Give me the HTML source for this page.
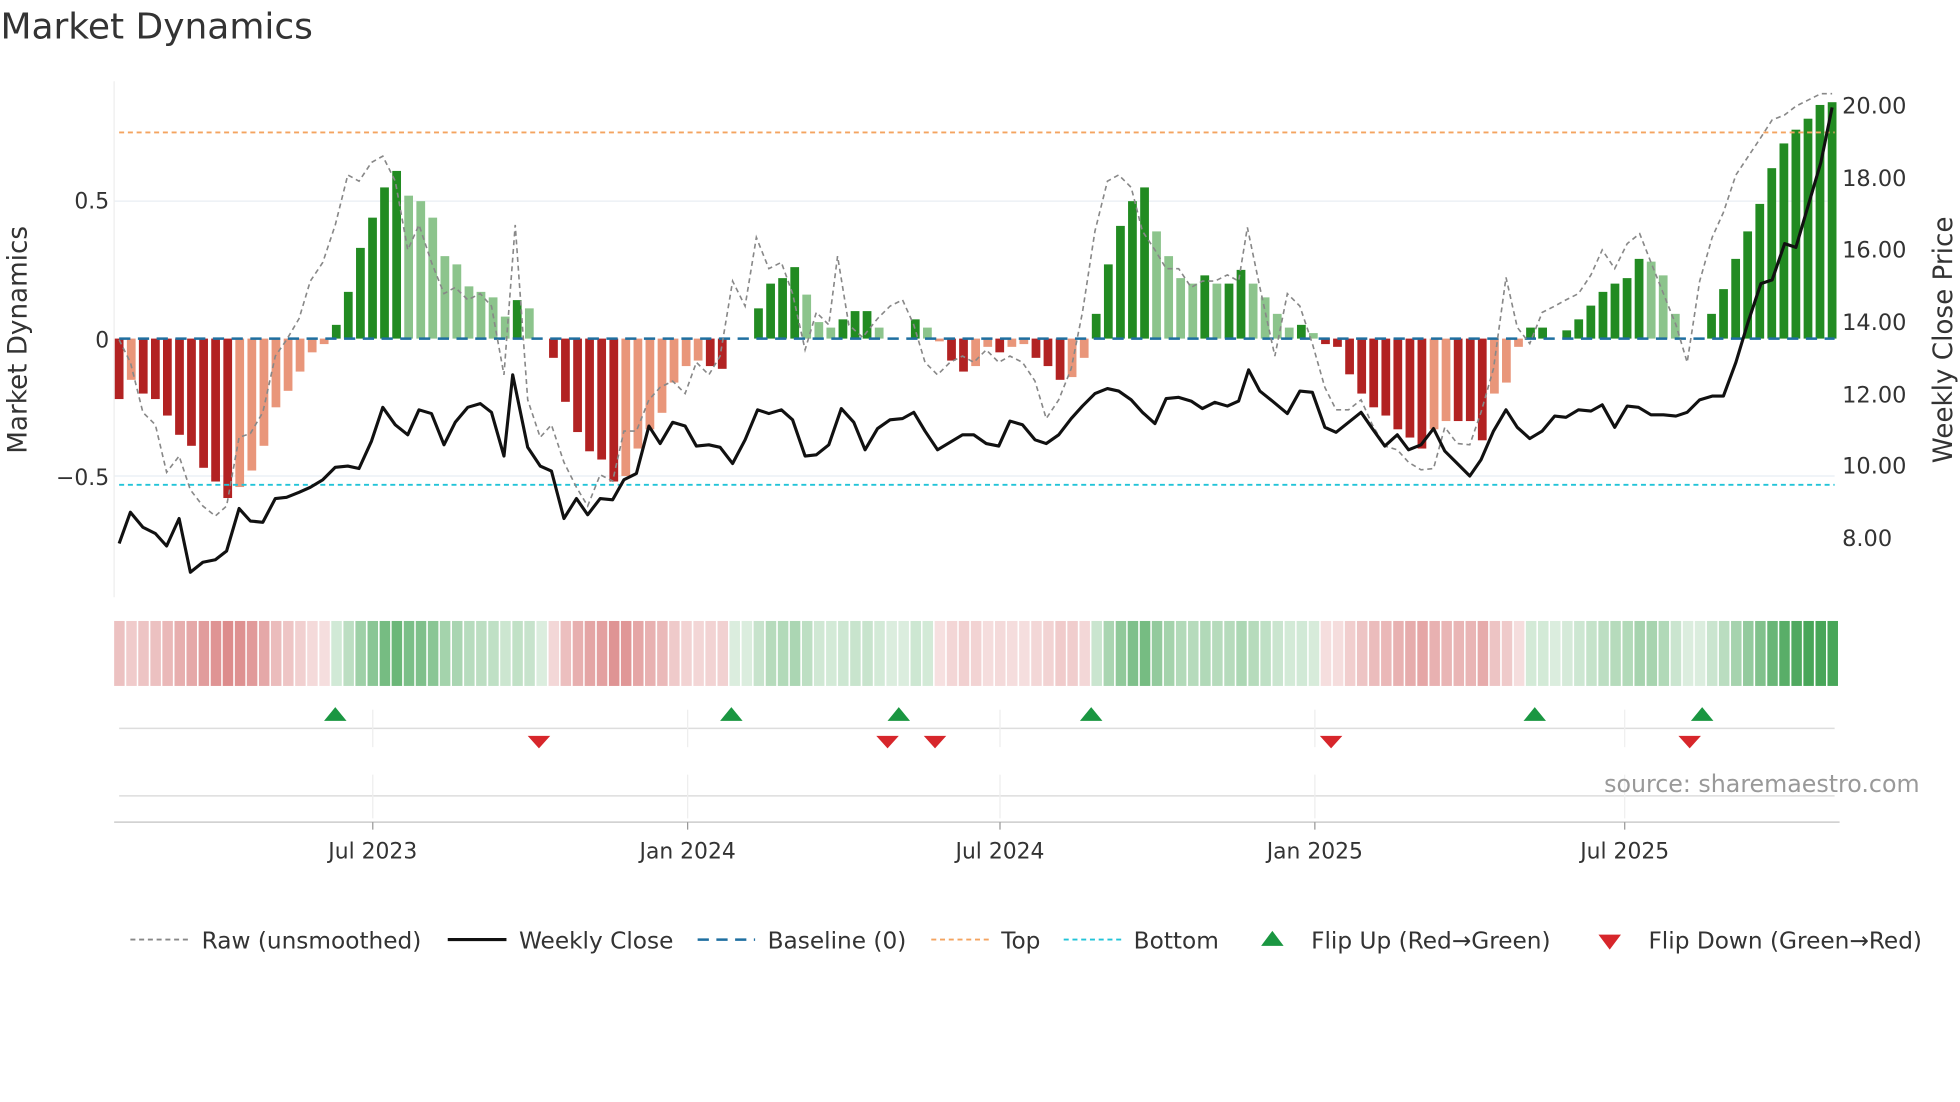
<!DOCTYPE html>
<html><head><meta charset="utf-8"><style>
html,body{margin:0;padding:0;background:#fff;width:1960px;height:1102px;overflow:hidden}
svg{display:block;font-family:"DejaVu Sans","Liberation Sans",sans-serif}
</style></head><body>
<svg id="s" width="1960" height="1102" viewBox="0 0 1568 882" xmlns="http://www.w3.org/2000/svg">
<rect width="1568" height="882" fill="#fff"/>
<text x="0" y="31" font-size="28.8" fill="#333">Market Dynamics</text>
<g id="main"></g>
<text x="87" y="167" font-size="17.5" fill="#333" text-anchor="end">0.5</text>
<text x="87" y="278" font-size="17.5" fill="#333" text-anchor="end">0</text>
<text x="87" y="388" font-size="17.5" fill="#333" text-anchor="end">−0.5</text>
<text transform="translate(21,272) rotate(-90)" font-size="21" fill="#333" text-anchor="middle">Market Dynamics</text>
<g font-size="18" fill="#333">
<text x="1474" y="91">20.00</text><text x="1474" y="149">18.00</text><text x="1474" y="206">16.00</text>
<text x="1474" y="264">14.00</text><text x="1474" y="322">12.00</text><text x="1474" y="379">10.00</text>
<text x="1474" y="437">8.00</text></g>
<text transform="translate(1562,272) rotate(-90)" font-size="21" fill="#333" text-anchor="middle">Weekly Close Price</text>
<g stroke="#ddd" stroke-width="1.2">
<line x1="95" y1="583" x2="1468" y2="583"/><line x1="95" y1="637" x2="1468" y2="637"/>
<line x1="91" y1="658" x2="1472" y2="658" stroke="#ccc"/>
</g>
<g stroke="#eee" stroke-width="1">
<line x1="298" y1="568" x2="298" y2="598"/><line x1="550" y1="568" x2="550" y2="598"/><line x1="800" y1="568" x2="800" y2="598"/><line x1="1052" y1="568" x2="1052" y2="598"/><line x1="1300" y1="568" x2="1300" y2="598"/>
<line x1="298" y1="620" x2="298" y2="655"/><line x1="550" y1="620" x2="550" y2="655"/><line x1="800" y1="620" x2="800" y2="655"/><line x1="1052" y1="620" x2="1052" y2="655"/><line x1="1300" y1="620" x2="1300" y2="655"/>
</g>
<g stroke="#999" stroke-width="1">
<line x1="298" y1="658" x2="298" y2="664"/><line x1="550" y1="658" x2="550" y2="664"/><line x1="800" y1="658" x2="800" y2="664"/><line x1="1052" y1="658" x2="1052" y2="664"/><line x1="1300" y1="658" x2="1300" y2="664"/>
</g>
<g font-size="17.5" fill="#333" text-anchor="middle">
<text x="298" y="687">Jul 2023</text><text x="550" y="687">Jan 2024</text><text x="800" y="687">Jul 2024</text><text x="1052" y="687">Jan 2025</text><text x="1300" y="687">Jul 2025</text></g>
<text x="1536" y="634" font-size="19" fill="#999" text-anchor="end">source: sharemaestro.com</text>
<g id="flips"></g>
<g font-size="18.6" fill="#333">
<line x1="104" y1="752" x2="150" y2="752" stroke="#888" stroke-width="1.5" stroke-dasharray="4,3"/>
<text x="161" y="759">Raw (unsmoothed)</text>
<line x1="358" y1="752" x2="405" y2="752" stroke="#111" stroke-width="2.5"/>
<text x="415" y="759">Weekly Close</text>
<line x1="558" y1="752" x2="604" y2="752" stroke="#1f6fa0" stroke-width="2" stroke-dasharray="9,6"/>
<text x="614" y="759">Baseline (0)</text>
<line x1="745" y1="752" x2="791" y2="752" stroke="#f4a460" stroke-width="1.5" stroke-dasharray="4,3"/>
<text x="801" y="759">Top</text>
<line x1="851" y1="752" x2="897" y2="752" stroke="#22c4d8" stroke-width="1.5" stroke-dasharray="4,3"/>
<text x="907" y="759">Bottom</text>
<polygon points="1009,757 1027,757 1018,745" fill="#1a9641"/>
<text x="1049" y="759">Flip Up (Red→Green)</text>
<polygon points="1279,748 1297,748 1288,760" fill="#d7262b"/>
<text x="1319" y="759">Flip Down (Green→Red)</text>
</g>
</svg>
<script>
var V=[-0.22,-0.15,-0.2,-0.22,-0.28,-0.35,-0.39,-0.47,-0.52,-0.58,-0.54,-0.48,-0.39,-0.25,-0.19,-0.12,-0.05,-0.02,0.05,0.17,0.33,0.44,0.55,0.61,0.52,0.5,0.44,0.3,0.27,0.19,0.17,0.15,0.08,0.14,0.11,0,-0.07,-0.23,-0.34,-0.41,-0.44,-0.52,-0.5,-0.4,-0.33,-0.27,-0.16,-0.1,-0.08,-0.1,-0.11,0,0,0.11,0.2,0.22,0.26,0.16,0.06,0.04,0.07,0.1,0.1,0.04,0,0,0.07,0.04,-0.01,-0.08,-0.12,-0.1,-0.03,-0.05,-0.03,-0.02,-0.07,-0.1,-0.15,-0.14,-0.07,0.09,0.27,0.41,0.5,0.55,0.39,0.3,0.22,0.2,0.23,0.2,0.2,0.25,0.2,0.15,0.09,0.04,0.05,0.02,-0.02,-0.03,-0.13,-0.2,-0.25,-0.28,-0.33,-0.36,-0.4,-0.33,-0.3,-0.3,-0.3,-0.37,-0.2,-0.16,-0.03,0.04,0.04,0,0.03,0.07,0.12,0.17,0.2,0.22,0.29,0.28,0.23,0.09,0,0,0.09,0.18,0.29,0.39,0.49,0.62,0.71,0.76,0.8,0.85,0.86];
var n=V.length,x0=95,dx=(1466-95)/(n-1);
var Y=function(v){return 271-v*220};
var h='';
h+='<line x1="91" y1="161" x2="1468" y2="161" stroke="#e8eef3"/><line x1="91" y1="381" x2="1468" y2="381" stroke="#e8eef3"/>';
h+='<line x1="91" y1="65" x2="91" y2="478" stroke="#eee"/>';
for(var i=0;i<n;i++){var v=V[i],p=i?V[i-1]:0,x=x0+i*dx-3.5,dark=Math.abs(v)>=Math.abs(p);
 if(v==0)continue;var c=v>0?(dark?'#228b22':'#8cc48c'):(dark?'#b22222':'#e9967a');
 var y=Math.min(Y(v),271),hh=Math.abs(Y(v)-271);h+='<rect x="'+x.toFixed(1)+'" y="'+y.toFixed(1)+'" width="7" height="'+hh.toFixed(1)+'" fill="'+c+'"/>';}
h+='<line x1="95" y1="271" x2="1468" y2="271" stroke="#1f6fa0" stroke-width="2" stroke-dasharray="9,6"/>';
h+='<line x1="95" y1="106" x2="1468" y2="106" stroke="#f4a460" stroke-width="1.5" stroke-dasharray="4,3"/>';
h+='<line x1="95" y1="388" x2="1468" y2="388" stroke="#22c4d8" stroke-width="1.5" stroke-dasharray="4,3"/>';
var R=[95,272,104,290,114,330,124,340,133,378,143,365,152,392,162,405,172,413,181,405,191,350,200,347,210,330,220,285,229,272,239,255,248,225,258,210,268,180,278,140,287,145,297,130,306,125,316,145,326,200,335,180,345,210,355,235,364,230,374,240,384,235,393,245,403,300,412,180,422,320,432,350,441,340,451,370,461,390,470,405,480,380,490,385,499,345,509,345,519,320,528,310,538,305,548,315,557,290,567,300,576,285,586,225,596,245,605,190,615,215,625,210,634,235,644,280,653,250,663,260,670,205,679,260,690,270,702,255,712,245,722,240,731,260,740,290,750,300,760,290,770,285,779,290,789,280,799,290,808,285,818,290,828,305,837,335,847,320,857,295,866,250,876,185,886,145,895,140,905,150,914,185,924,200,933,215,943,215,953,230,962,225,972,225,982,220,991,225,998,182,1008,230,1020,285,1030,235,1040,245,1050,275,1060,310,1069,328,1079,328,1089,320,1098,340,1108,357,1118,360,1127,370,1137,376,1147,375,1156,342,1166,355,1176,356,1185,330,1195,295,1205,222,1214,262,1224,275,1234,250,1244,245,1253,240,1263,235,1273,220,1282,200,1292,215,1302,195,1312,187,1321,210,1331,235,1341,260,1350,290,1360,225,1370,190,1379,170,1389,140,1399,125,1409,110,1418,96,1428,92,1437,85,1447,80,1457,75,1466,75];
h+='<polyline fill="none" stroke="#888" stroke-width="1.3" stroke-dasharray="4,3" points="'+R.join(',')+'"/>';
var C=[95,435,104,410,114,422,124,427,133,437,143,415,152,458,162,450,172,448,181,441,191,407,200,417,210,418,220,399,229,398,239,394,248,390,258,384,268,374,278,373,287,375,297,353,306,326,316,340,326,348,335,328,345,331,355,356,364,338,374,326,384,323,393,330,403,365,410,300,422,358,432,373,441,377,451,415,461,399,470,412,480,399,490,400,499,384,509,379,519,341,528,355,538,338,548,341,557,357,567,356,576,358,586,371,596,352,606,328,615,331,625,328,634,336,644,365,653,364,663,356,673,327,683,338,692,360,702,343,712,336,722,335,731,330,740,345,750,360,760,354,770,348,779,348,789,355,799,357,808,337,818,340,828,352,837,355,847,348,857,335,866,325,876,315,886,311,895,313,905,320,914,330,924,339,933,319,943,318,953,321,962,327,972,322,982,325,991,321,999,296,1008,313,1018,321,1030,331,1040,313,1050,314,1060,342,1069,346,1079,338,1089,330,1098,343,1108,357,1118,348,1127,360,1137,356,1147,343,1156,361,1166,371,1176,381,1185,368,1195,345,1205,328,1214,342,1224,351,1234,345,1244,333,1253,334,1263,328,1273,329,1282,324,1292,342,1302,325,1311,326,1321,332,1331,332,1341,333,1350,330,1360,320,1370,317,1379,317,1389,290,1399,257,1409,227,1418,224,1428,195,1437,198,1447,164,1457,130,1466,86];
h+='<polyline fill="none" stroke="#111" stroke-width="2.5" stroke-linejoin="round" points="'+C.join(',')+'"/>';
var w=(1472-91)/n;
for(var i=0;i<n;i++){var v=V[i],a=Math.min(1,0.2+Math.abs(v)*1.0);
 var c=v>=0?'rgba(40,150,60,'+(a*0.85)+')':'rgba(200,70,70,'+(a*0.8)+')';
 h+='<rect x="'+(91+i*w).toFixed(1)+'" y="497" width="'+(w-1.3).toFixed(1)+'" height="52" fill="'+c+'"/>';}
document.getElementById('main').innerHTML=h;
var f='';
[268,585,719,873,1228,1362].forEach(function(x){f+='<polygon points="'+(x-9)+',577 '+(x+9)+',577 '+x+',566" fill="#1a9641"/>';});
[431,710,748,1065,1352].forEach(function(x){f+='<polygon points="'+(x-9)+',589 '+(x+9)+',589 '+x+',599" fill="#d7262b"/>';});
document.getElementById('flips').innerHTML=f;
</script>
</body></html>
